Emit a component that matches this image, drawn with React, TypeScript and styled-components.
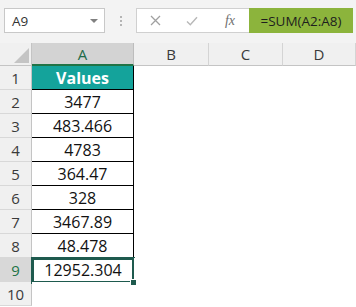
import styled, { createGlobalStyle, css } from 'styled-components';

const GlobalStyle = createGlobalStyle`
  html, body {
    margin: 0;
    padding: 0;
    background: #ffffff;
    font-family: 'Open Sans', 'Liberation Sans', sans-serif;
    overflow: hidden;
  }
`;

const Sheet = styled.div`
  width: 356px;
  height: 307px;
  overflow: hidden;
  background: #ffffff;
`;

const Toolbar = styled.div`
  height: 43px;
  background: #f3f3f3;
  display: flex;
  align-items: flex-start;
  padding: 8px 3px 0 4px;
  box-sizing: border-box;
`;

const NameBox = styled.div`
  width: 101px;
  height: 25px;
  box-sizing: border-box;
  background: #fff;
  border: 1px solid #c8c8c8;
  display: flex;
  align-items: center;
  justify-content: space-between;
  padding: 0 6px 0 7px;
  font-size: 13.5px;
  color: #333;
`;

const DropArrow = styled.span`
  width: 0;
  height: 0;
  border-left: 4px solid transparent;
  border-right: 4px solid transparent;
  border-top: 4px solid #808080;
`;

const Grip = styled.div`
  width: 31px;
  height: 25px;
  display: flex;
  flex-direction: column;
  align-items: center;
  justify-content: center;
  gap: 2px;
  & span {
    width: 2px;
    height: 2px;
    background: #b4b4b4;
  }
`;

const FormulaBar = styled.div`
  flex: 1;
  height: 25px;
  display: flex;
  box-sizing: border-box;
  background: #fff;
  border: 1px solid #d0d0d0;
  border-right: none;
`;

const IconSlot = styled.div<{ $w: number }>`
  width: ${({ $w }) => $w}px;
  display: flex;
  align-items: center;
  justify-content: center;
`;

const Fx = styled.span`
  font-family: 'Liberation Serif', serif;
  font-style: italic;
  font-size: 14px;
  color: #707070;
`;

const FormulaText = styled.div`
  width: 104px;
  margin: -1px 0;
  background: #8cb43c;
  display: flex;
  align-items: center;
  justify-content: center;
  font-size: 13.5px;
  color: #1e1e1e;
`;

const Grid = styled.div`
  display: grid;
  grid-template-columns: 32px 102px 75px 74px 73px;
  grid-template-rows: 23px repeat(10, 24px);
`;

const ColHead = styled.div<{ $selected?: boolean }>`
  box-sizing: border-box;
  background: #f0f0f0;
  border-right: 1px solid #d4d4d4;
  border-bottom: 1px solid #c4c4c4;
  display: flex;
  align-items: center;
  justify-content: center;
  font-size: 15px;
  color: #3a3a3a;
  ${({ $selected }) =>
    $selected &&
    css`
      background: #d3d3d3;
      color: #1e6b4a;
      border-bottom: 2px solid #217346;
      border-right-color: #bdbdbd;
    `}
`;

const Corner = styled.div`
  box-sizing: border-box;
  background: #f0f0f0;
  border-right: 1px solid #c4c4c4;
  border-bottom: 1px solid #c4c4c4;
  display: flex;
  align-items: flex-end;
  justify-content: flex-end;
  padding: 0 2px 2px 0;
`;

const RowHead = styled.div<{ $selected?: boolean }>`
  box-sizing: border-box;
  background: #f0f0f0;
  border-right: 1px solid #c4c4c4;
  border-bottom: 1px solid #d8d8d8;
  display: flex;
  align-items: center;
  justify-content: center;
  font-size: 15px;
  color: #3a3a3a;
  ${({ $selected }) =>
    $selected &&
    css`
      background: #d8d8d8;
      color: #217346;
    `}
`;

const Cell = styled.div<{ $head?: boolean; $boxed?: boolean; $active?: boolean }>`
  position: relative;
  box-sizing: border-box;
  display: flex;
  align-items: center;
  justify-content: center;
  font-size: 16px;
  color: #111;
  background: #fff;
  ${({ $boxed }) =>
    $boxed &&
    css`
      border-right: 1px solid #000;
      border-bottom: 1px solid #000;
    `}
  ${({ $head }) =>
    $head &&
    css`
      background: #14a39b;
      color: #fff;
      font-weight: 700;
    `}
  ${({ $active }) =>
    $active &&
    css`
      &::after {
        content: '';
        position: absolute;
        top: -1px;
        left: -1px;
        right: -1px;
        bottom: -2px;
        border: 3px solid #1e5a4e;
      }
    `}
`;

const FillHandle = styled.span`
  position: absolute;
  right: -3px;
  bottom: -4px;
  width: 5px;
  height: 5px;
  background: #1e5a4e;
  border: 1px solid #fff;
  z-index: 2;
`;

const columns = ['A', 'B', 'C', 'D'];
const values = ['3477', '483.466', '4783', '364.47', '328', '3467.89', '48.478', '12952.304'];

export default function App() {
  const rows = ['Values', ...values, ''];

  return (
    <Sheet>
      <GlobalStyle />
      <Toolbar>
        <NameBox>
          A9
          <DropArrow />
        </NameBox>
        <Grip>
          <span />
          <span />
          <span />
        </Grip>
        <FormulaBar>
          <IconSlot $w={36}>
            <svg width="11" height="11" viewBox="0 0 11 11">
              <path d="M1 1 L10 10 M10 1 L1 10" stroke="#a0a0a0" strokeWidth="1.3" fill="none" />
            </svg>
          </IconSlot>
          <IconSlot $w={38}>
            <svg width="12" height="10" viewBox="0 0 12 10">
              <path d="M1 5.5 L4.3 8.8 L11 1.2" stroke="#b8b8b8" strokeWidth="1.4" fill="none" />
            </svg>
          </IconSlot>
          <IconSlot $w={38}>
            <Fx>fx</Fx>
          </IconSlot>
          <FormulaText>=SUM(A2:A8)</FormulaText>
        </FormulaBar>
      </Toolbar>

      <Grid>
        <Corner>
          <svg width="15" height="15" viewBox="0 0 15 15">
            <path d="M15 0 L15 15 L0 15 Z" fill="#c4c4c4" />
          </svg>
        </Corner>
        {columns.map((c) => (
          <ColHead key={c} $selected={c === 'A'}>
            {c}
          </ColHead>
        ))}

        {rows.map((v, i) => {
          const rowNum = i + 1;
          const active = rowNum === 9;
          return [
            <RowHead key={`h${rowNum}`} $selected={active}>
              {rowNum}
            </RowHead>,
            <Cell key={`a${rowNum}`} $head={rowNum === 1} $boxed={rowNum <= 8} $active={active}>
              {v}
              {active && <FillHandle />}
            </Cell>,
            <Cell key={`b${rowNum}`} />,
            <Cell key={`c${rowNum}`} />,
            <Cell key={`d${rowNum}`} />,
          ];
        })}
      </Grid>
    </Sheet>
  );
}
